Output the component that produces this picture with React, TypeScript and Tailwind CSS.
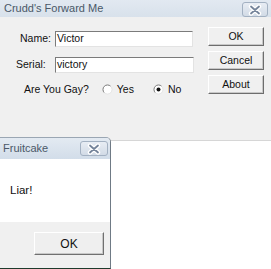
import React from 'react'

const ui = { fontFamily: '"Liberation Sans", Arial, sans-serif' }

function CloseButton({ className }: { className: string }) {
  return (
    <div
      className={`flex items-center justify-center rounded-[3px] border border-[#a3b1c2] bg-gradient-to-b from-[#e8edf4] to-[#d2dbe6] ${className}`}
    >
      <svg width="14" height="12" viewBox="0 0 14 12">
        <path
          d="M3 2.5 L11 9.5 M11 2.5 L3 9.5"
          stroke="#ffffff"
          strokeWidth="4.4"
          strokeLinecap="round"
        />
        <path
          d="M3 2.5 L11 9.5 M11 2.5 L3 9.5"
          stroke="#75849a"
          strokeWidth="1.8"
          strokeLinecap="round"
        />
      </svg>
    </div>
  )
}

function WinButton({ label, className }: { label: string; className: string }) {
  return (
    <div
      className={`flex items-center justify-center border border-t-[#ffffff] border-l-[#ffffff] border-r-[#6d6d6d] border-b-[#6d6d6d] bg-[#f0f0f0] text-[10.5px] text-[#111] shadow-[inset_-1px_-1px_0_#c8c8c8] ${className}`}
    >
      {label}
    </div>
  )
}

function TextBox({ value, width }: { value: string; width: string }) {
  return (
    <div
      className={`flex h-[16px] items-center border border-t-[#7b7b7b] border-l-[#7b7b7b] border-r-[#e3e3e3] border-b-[#e3e3e3] bg-white pl-[1px] text-[10.5px] text-[#111] ${width}`}
    >
      {value}
    </div>
  )
}

function Radio({ checked }: { checked: boolean }) {
  return (
    <svg width="11" height="11" viewBox="0 0 11 11">
      <circle cx="5.5" cy="5.5" r="4.5" fill="#ffffff" />
      <path d="M8.7 2.3 A4.5 4.5 0 0 0 2.3 8.7" stroke="#7a7a7a" strokeWidth="1" fill="none" />
      <path d="M2.3 8.7 A4.5 4.5 0 0 0 8.7 2.3" stroke="#e4e4e4" strokeWidth="1" fill="none" />
      {checked && <circle cx="5.5" cy="5.5" r="2" fill="#111111" />}
    </svg>
  )
}

export default function App() {
  return (
    <div className="relative h-[269px] w-[271px] overflow-hidden bg-white" style={ui}>
      {/* Main window */}
      <div className="flex h-[141px] w-full flex-col border-b border-[#d6d6d6] bg-[#f0f0f0]">
        <div className="flex h-[17px] items-center justify-between bg-gradient-to-b from-[#e2e9f1] to-[#d8e1eb] pl-[4px] pr-[3px]">
          <span className="text-[11px] text-[#4a5868]">Crudd's Forward Me</span>
          <CloseButton className="mt-[2px] h-[15px] w-[26px]" />
        </div>
        <div className="flex">
          <div className="flex w-[208px] flex-col pt-[14px]">
            <div className="flex items-center">
              <span className="w-[55px] pl-[20px] text-[10.5px] text-[#111]">Name:</span>
              <TextBox value="Victor" width="w-[138px]" />
            </div>
            <div className="mt-[10px] flex items-center">
              <span className="w-[55px] pl-[16px] text-[10.5px] text-[#111]">Serial:</span>
              <TextBox value="victory" width="w-[139px]" />
            </div>
            <div className="mt-[9px] flex items-center text-[10.5px] text-[#111]">
              <span className="pl-[24px]">Are You Gay?</span>
              <span className="ml-[13px] flex items-center gap-[4px]">
                <Radio checked={false} />
                Yes
              </span>
              <span className="ml-[19px] flex items-center gap-[4px]">
                <Radio checked={true} />
                No
              </span>
            </div>
          </div>
          <div className="flex flex-col gap-[5px] pt-[10px]">
            <WinButton label="OK" className="h-[19px] w-[56px]" />
            <WinButton label="Cancel" className="h-[19px] w-[56px]" />
            <WinButton label="About" className="h-[19px] w-[56px]" />
          </div>
        </div>
      </div>

      {/* Message box window */}
      <div className="absolute left-0 top-[137px] flex h-[132px] w-[111px] flex-col overflow-hidden rounded-tr-[5px] border-r border-t border-b border-r-[#6f7a85] border-t-[#9aa6b3] border-b-[#1e3b2c] bg-[#f0f0f0]">
        <div className="flex h-[21px] items-center justify-between bg-gradient-to-b from-[#e3eaf2] to-[#d2dde9] pl-[3px] pr-[2px]">
          <span className="text-[11px] text-[#4a5868]">Fruitcake</span>
          <CloseButton className="h-[15px] w-[28px]" />
        </div>
        <div className="flex h-[63px] items-center bg-white pl-[10px] text-[11.5px] text-[#111]">
          Liar!
        </div>
        <div className="flex flex-1 justify-end pr-[6px] pt-[10px]">
          <div className="flex h-[23px] w-[70px] items-center justify-center border border-t-[#ffffff] border-l-[#ffffff] border-r-[#707070] border-b-[#707070] bg-[#efefef] text-[12px] text-[#111] shadow-[inset_-1px_-1px_0_#c8c8c8]">
            OK
          </div>
        </div>
      </div>
    </div>
  )
}
